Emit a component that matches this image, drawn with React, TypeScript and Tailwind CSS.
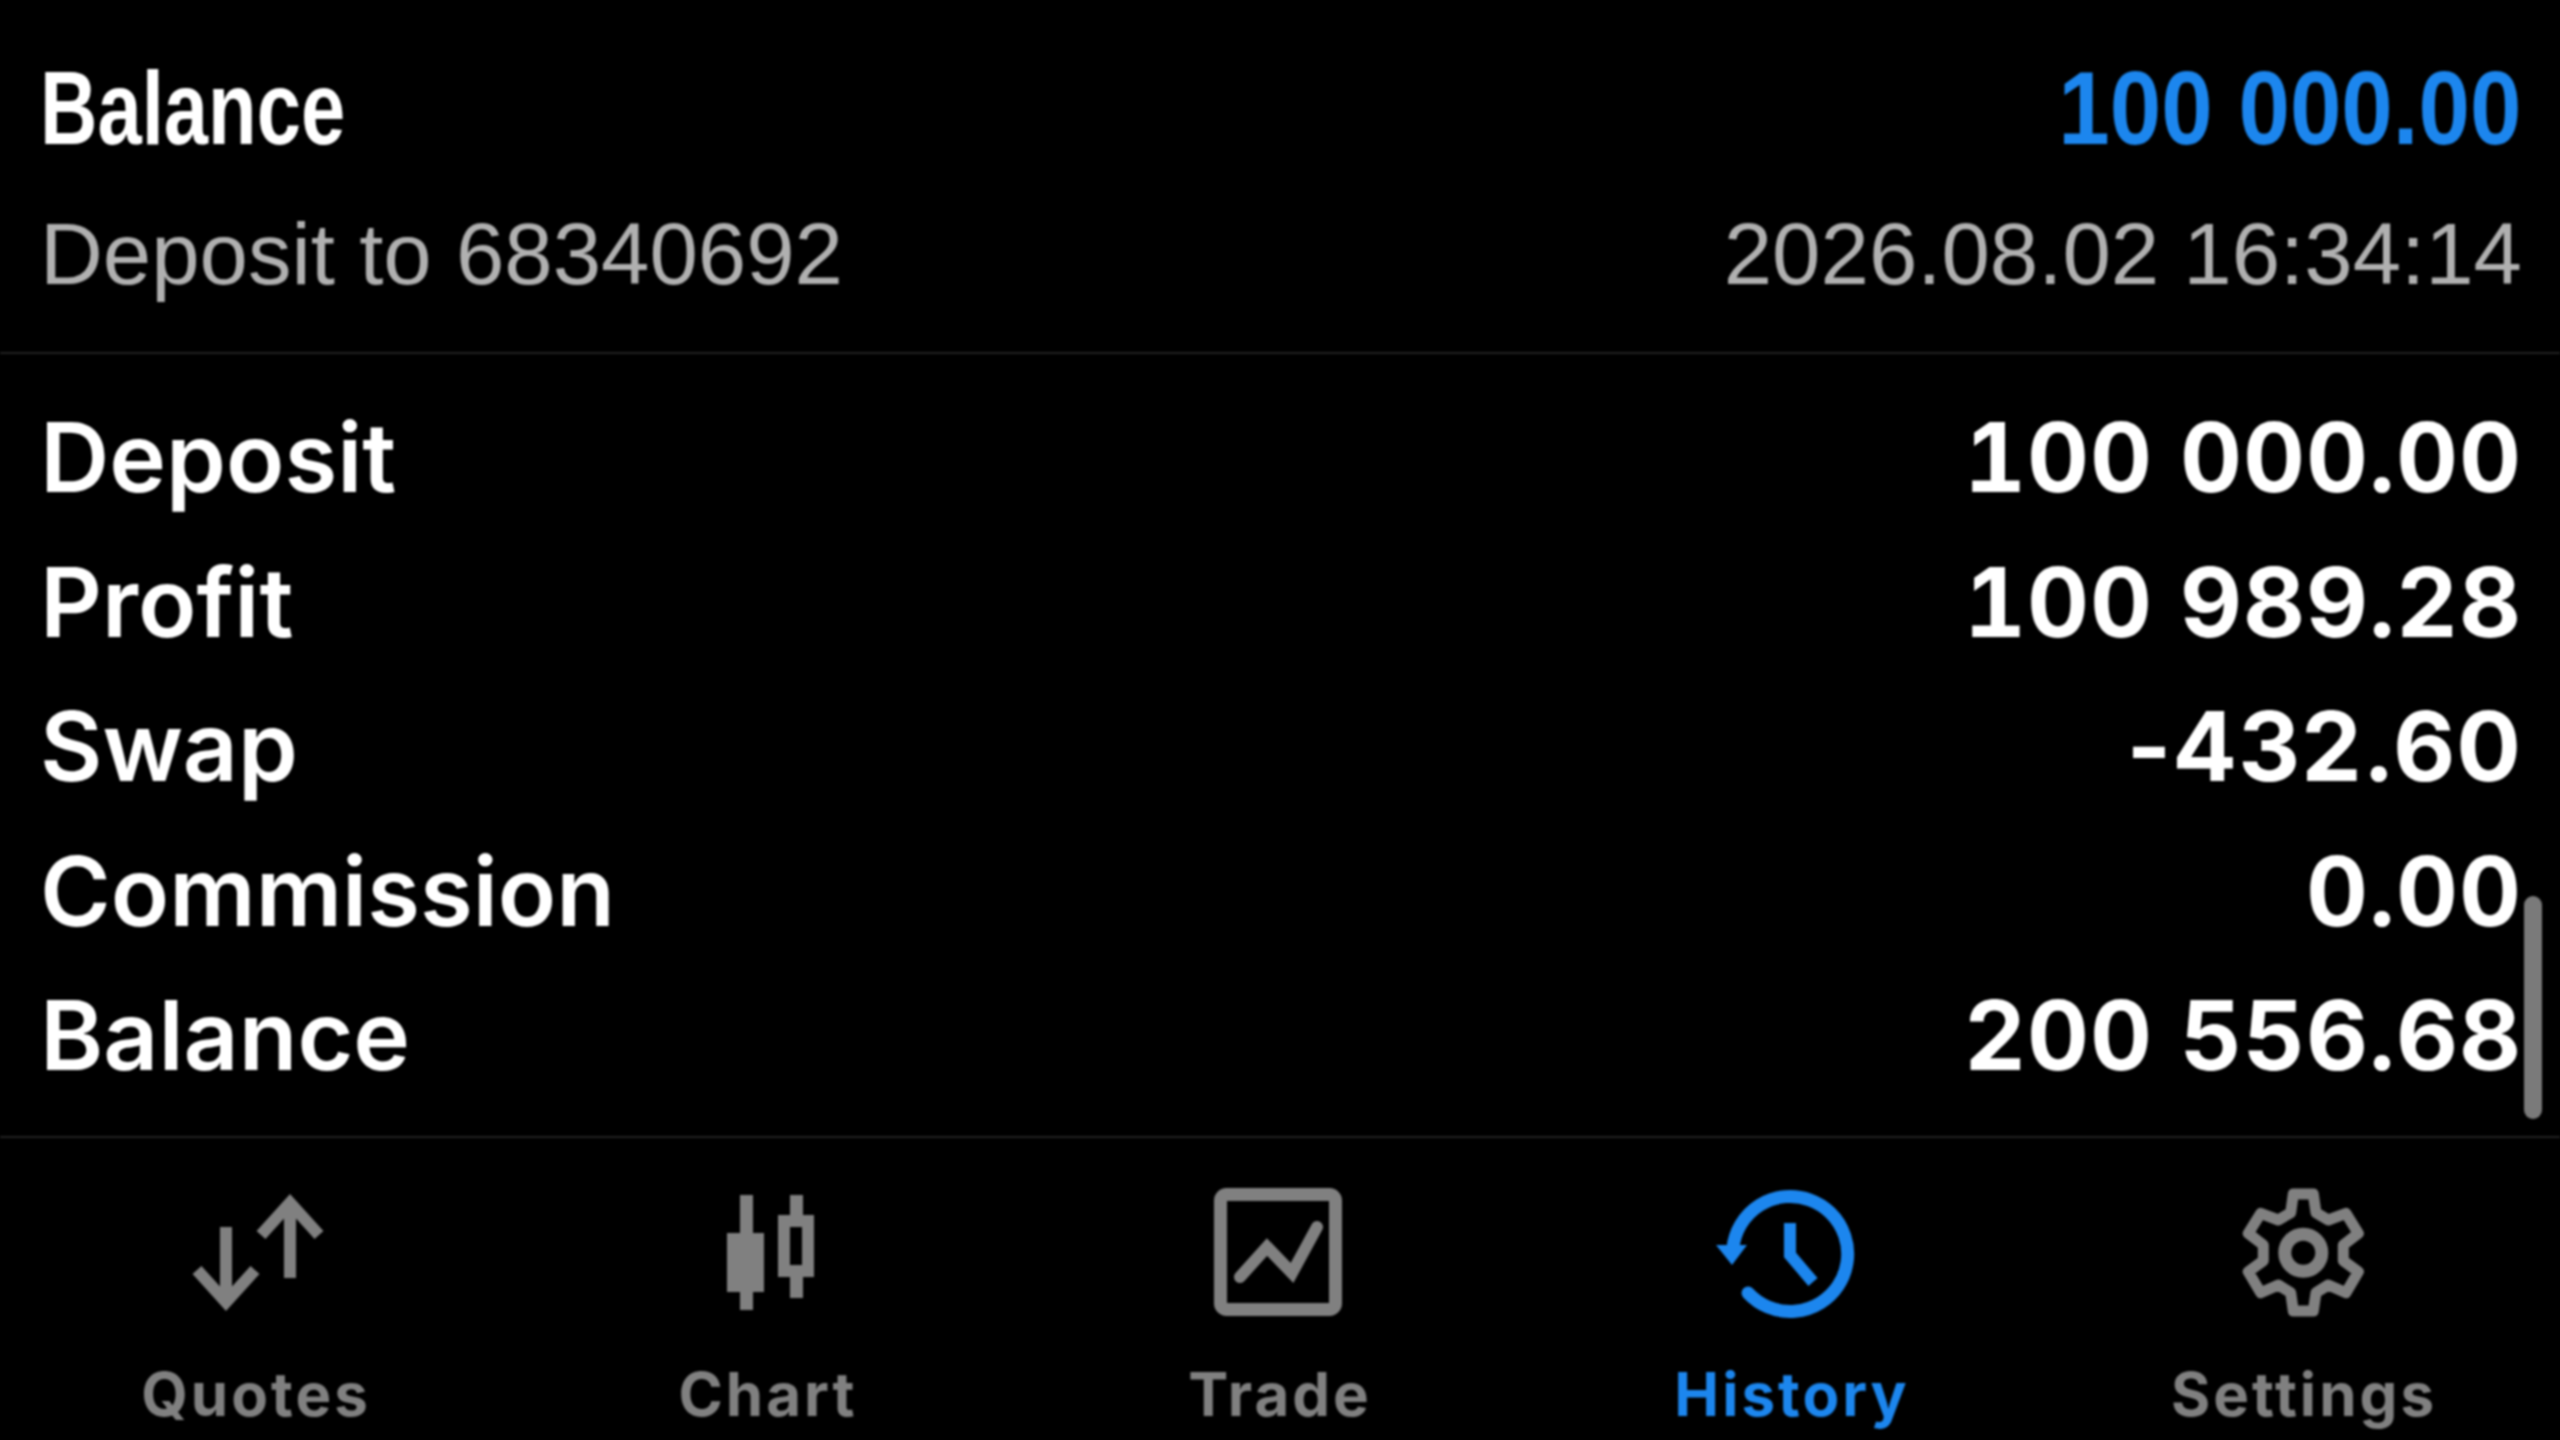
const rows = [
  ["Deposit", "100 000.00"],
  ["Profit", "100 989.28"],
  ["Swap", "-432.60"],
  ["Commission", "0.00"],
  ["Balance", "200 556.68"],
];

function QuotesIcon() {
  return (
    <svg width="140" height="140" viewBox="0 0 140 140" fill="none" stroke="currentColor" strokeWidth="12">
      <path d="M75 52L104 20L133 52M104 20V95" />
      <path d="M11 87L40 119L69 87M40 119V44" />
    </svg>
  );
}

function ChartIcon() {
  return (
    <svg width="140" height="140" viewBox="0 0 140 140" fill="currentColor">
      <rect x="29" y="50" width="37" height="59" />
      <rect x="42" y="12" width="13" height="115" />
      <rect x="92" y="12" width="13" height="103" />
      <rect x="86" y="38" width="24" height="50" stroke="currentColor" strokeWidth="12" fill="#000" />
    </svg>
  );
}

function TradeIcon() {
  return (
    <svg width="140" height="140" viewBox="0 0 140 140" fill="none" stroke="currentColor">
      <rect x="10.5" y="11.5" width="115" height="115" rx="6" strokeWidth="13" />
      <path d="M30 94L57 64L82 90L107 44" strokeWidth="12" strokeLinecap="round" />
    </svg>
  );
}

function HistoryIcon() {
  return (
    <svg width="180" height="140" viewBox="0 0 180 140" fill="none" stroke="currentColor">
      <path d="M31 65A57.5 57.5 0 1 1 46 110" strokeWidth="13" strokeLinecap="round" />
      <path d="M14 62H45L30 82Z" fill="currentColor" stroke="none" />
      <path d="M88 40V72L111 99" strokeWidth="12" />
    </svg>
  );
}

function SettingsIcon() {
  return (
    <svg width="140" height="140" viewBox="0 0 140 140" fill="none" stroke="currentColor" strokeWidth="11">
      <path
        d="M59.3 11H79.3L82 29.7L94.3 37L112 30.3L124.3 50.3L109.3 62V77.7L124.3 88.7L112 109.7L94.3 102L82 109.7L79.3 128H59.3L56.7 109.7L44.3 102L26.7 109.7L14.3 88.7L29.3 77.7V62L14.3 50.3L26.7 30.3L44.3 37L56.7 29.7Z"
        strokeLinejoin="round"
      />
      <circle cx="69.3" cy="69.7" r="18.5" strokeWidth="13" />
    </svg>
  );
}

const tabs = [
  { label: "Quotes", icon: <QuotesIcon /> },
  { label: "Chart", icon: <ChartIcon /> },
  { label: "Trade", icon: <TradeIcon /> },
  { label: "History", icon: <HistoryIcon />, active: true },
  { label: "Settings", icon: <SettingsIcon /> },
];

export default function App() {
  return (
    <div className="h-[1440px] w-[2560px] overflow-hidden bg-black">
      <main className="relative flex h-[1440px] w-[2560px] flex-col bg-black font-['Inter',sans-serif] text-white blur-[1px]">
        <section className="h-[354px] border-b-2 border-[#222222] pt-[52px] pr-[38px] pl-[40px]">
          <div className="flex items-center justify-between">
            <span className="origin-left scale-x-[0.765] font-['Liberation_Sans',sans-serif] text-[104px] leading-[112px] font-bold">
              Balance
            </span>
            <span className="origin-right scale-x-[0.89] font-['Liberation_Sans',sans-serif] text-[104px] leading-[112px] font-bold text-[#1c86ee]">
              100 000.00
            </span>
          </div>
          <div className="mt-[45px] flex items-center justify-between font-['Liberation_Sans',sans-serif] text-[87px] leading-[90px] text-[#b0b0b0]">
            <span>Deposit to 68340692</span>
            <span>2026.08.02 16:34:14</span>
          </div>
        </section>

        <section className="flex h-[784px] flex-col border-b-2 border-[#222222] pt-[31px] pr-[38px] pl-[40px]">
          {rows.map(([label, value]) => (
            <div key={label} className="flex h-[144.5px] items-center justify-between text-[96px] font-semibold">
              <span>{label}</span>
              <span className={`font-bold tracking-[1px] ${value.startsWith("-") ? "" : "tabular-nums"}`}>{value}</span>
            </div>
          ))}
        </section>

        <div className="absolute top-[896px] left-[2524px] h-[223px] w-[18px] rounded-full bg-[#7a7a7a]" />

        <nav className="grid flex-1 grid-cols-5 pt-[45px] text-[#808080]">
          {tabs.map((tab) => (
            <div key={tab.label} className={`flex flex-col items-center ${tab.active ? "text-[#1c86ee]" : ""}`}>
              <div className="flex h-[140px] items-center justify-center">{tab.icon}</div>
              <span className="mt-[36px] text-[60px] leading-[70px] font-bold tracking-[3px]">{tab.label}</span>
            </div>
          ))}
        </nav>
      </main>
    </div>
  );
}
